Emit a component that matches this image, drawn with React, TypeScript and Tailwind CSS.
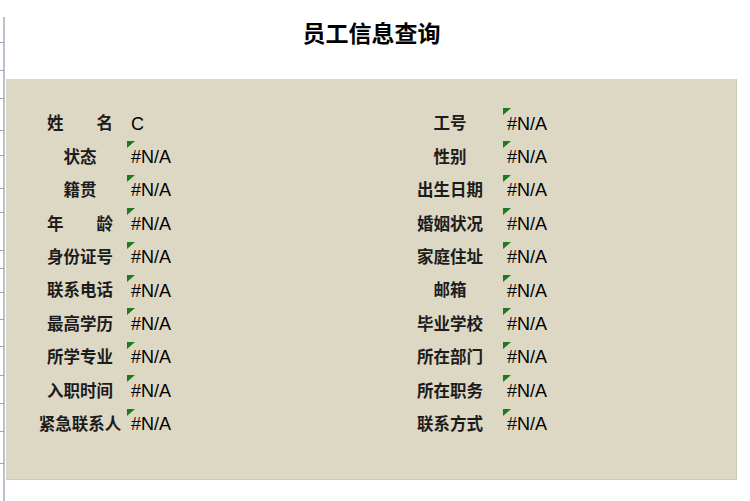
import React from "react";

const left = [
  { label: "姓名", value: "C", spread: true },
  { label: "状态" },
  { label: "籍贯" },
  { label: "年龄", spread: true },
  { label: "身份证号" },
  { label: "联系电话" },
  { label: "最高学历" },
  { label: "所学专业" },
  { label: "入职时间" },
  { label: "紧急联系人" },
];

const right = [
  "工号",
  "性别",
  "出生日期",
  "婚姻状况",
  "家庭住址",
  "邮箱",
  "毕业学校",
  "所在部门",
  "所在职务",
  "联系方式",
];

const ticks = [26, 28, 28, 32, 25, 33, 24, 38, 18, 24, 27, 27, 29, 28, 28, 32];

const Label = ({ text, spread }: { text: string; spread?: boolean }) => (
  <div className="w-[80px] flex justify-center whitespace-nowrap text-[16.5px] leading-none font-bold text-[#1c1c1c] -translate-y-[1px]">
    {spread ? (
      <span className="w-[66px] flex justify-between">
        {text.split("").map((c) => (
          <span key={c}>{c}</span>
        ))}
      </span>
    ) : (
      <span>{text}</span>
    )}
  </div>
);

const Value = ({ text, flag }: { text: string; flag: boolean }) => (
  <div className="relative h-full w-[70px] pl-[4px] flex items-center">
    {flag && (
      <svg className="absolute left-0 top-[1px]" width="8" height="7" viewBox="0 0 8 7">
        <polygon points="0,0 8,0 0,7" fill="#1f7a1f" />
      </svg>
    )}
    <span className="text-[18px] leading-none text-black font-['Liberation_Sans',Arial,sans-serif]">{text}</span>
  </div>
);

export default function App() {
  return (
    <div className="w-[750px] h-[501px] bg-white flex overflow-hidden font-['Noto_Sans_CJK_SC','Noto_Sans',sans-serif]">
      <div className="w-[6px] flex flex-col pt-[17px]">
        <div className="flex-1 flex flex-col border-r-2 border-[#bcc0cf] w-[5px]">
          {ticks.map((h, i) => (
            <div key={i} className="flex flex-col justify-end" style={{ height: h }}>
              <div className="h-px w-[4px] bg-[#9fa3b3]" />
            </div>
          ))}
        </div>
      </div>
      <div className="w-[731px] flex flex-col">
        <div className="h-[79px] flex justify-center pt-[17px]">
          <h1 className="text-[23px] leading-[30px] font-bold text-black">员工信息查询</h1>
        </div>
        <div className="h-[401px] bg-[#ddd8c4] border-r border-b border-[#cfcab5] pt-[28px] flex flex-col">
          {left.map((row, i) => (
            <div key={i} className="h-[33.4px] flex items-center">
              <div className="w-[34px]" />
              <Label text={row.label} spread={row.spread} />
              <div className="w-[7px]" />
              <Value text={row.value ?? "#N/A"} flag={!row.value} />
              <div className="w-[213px]" />
              <Label text={right[i]} />
              <div className="w-[13px]" />
              <Value text="#N/A" flag />
            </div>
          ))}
        </div>
      </div>
    </div>
  );
}
